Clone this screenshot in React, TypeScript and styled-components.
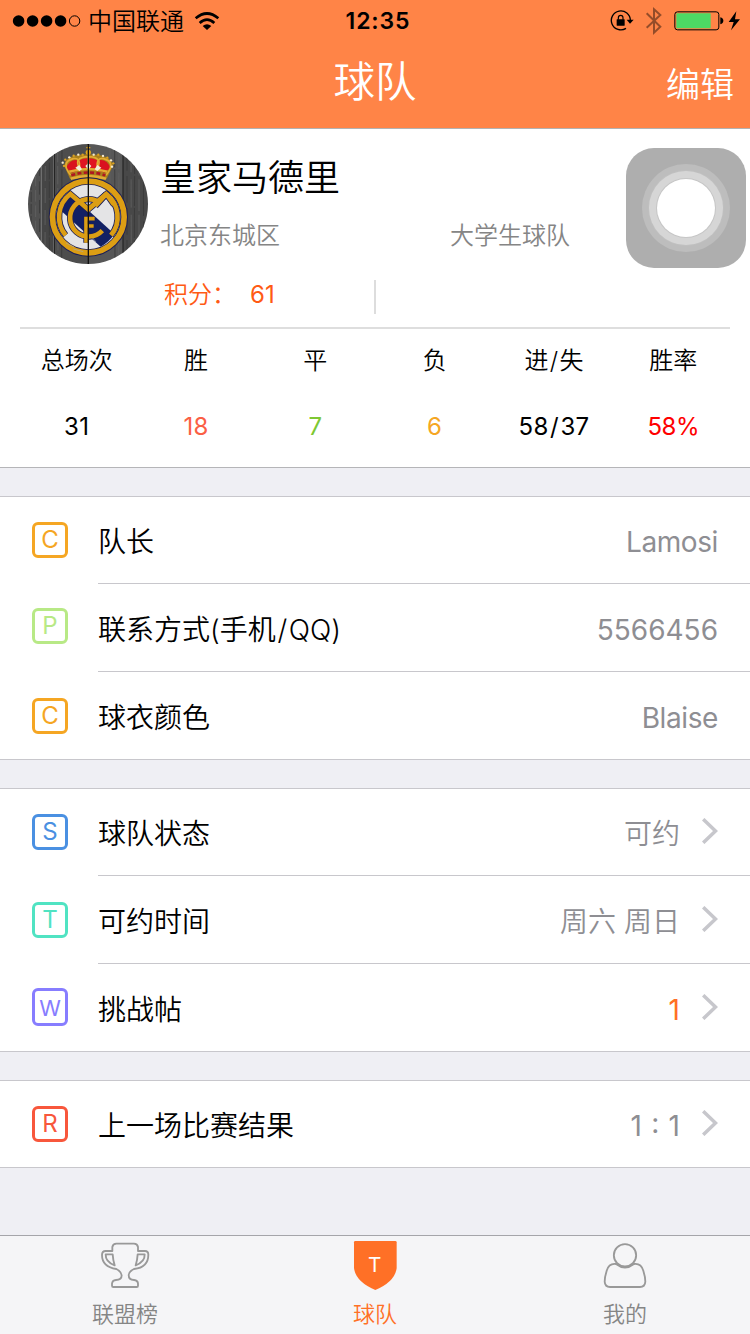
import React from "react";
import styled, { createGlobalStyle } from "styled-components";

const GlobalStyle = createGlobalStyle`
  * { box-sizing: border-box; }
  body {
    margin: 0;
    background: #efeff4;
    font-family: Inter, "Noto Sans CJK SC", sans-serif;
    font-weight: 350;
    color: #000;
  }
`;

const Screen = styled.div`
  width: 750px;
  height: 1334px;
  position: relative;
  display: flex;
  flex-direction: column;
  overflow: hidden;
  background: #efeff4;
`;

const Header = styled.header`
  height: 129px;
  flex: none;
  background: #ff8447;
  border-bottom: 1px solid #b2b2b2;
`;

const StatusBar = styled.div`
  height: 40px;
  display: grid;
  grid-template-columns: 1fr auto 1fr;
  align-items: center;
  padding: 1px 9px 0 12px;
`;

const StatusLeft = styled.div`
  display: flex;
  align-items: center;
`;

const Carrier = styled.span`
  margin: 0 10px 0 7px;
  padding-top: 2px;
  font-size: 24px;
  line-height: 38px;
`;

const Clock = styled.span`
  font-size: 23px;
  line-height: 38px;
  font-weight: 600;
  letter-spacing: 0.9px;
  padding-left: 3px;
`;

const NavBar = styled.div`
  height: 88px;
  display: grid;
  grid-template-columns: 1fr auto 1fr;
  color: #fff;
`;

const Title = styled.h1`
  grid-column: 2;
  margin: 0;
  font-size: 41.5px;
  line-height: 84px;
  font-weight: 350;
`;

const EditButton = styled.button`
  justify-self: end;
  border: 0;
  padding: 1px 16px 0 0;
  background: none;
  color: inherit;
  font: inherit;
  font-size: 34px;
  line-height: 88px;
`;

const Profile = styled.section`
  height: 339px;
  flex: none;
  background: #fff;
  border-bottom: 1px solid #b5b5b8;
`;

const Summary = styled.div`
  height: 200px;
  margin: 0 20px;
  padding: 15px 0 0 8px;
  display: flex;
  border-bottom: 2px solid #dedede;
`;

const Crest = styled.svg`
  width: 120px;
  height: 120px;
  flex: none;
  border-radius: 50%;
`;

const Facts = styled.div`
  margin-left: 12px;
  display: grid;
  grid-template-columns: 215px 75px auto;
  grid-template-rows: 68px 48px 50px;
  align-content: start;
`;

const TeamName = styled.h2`
  grid-column: 1 / -1;
  margin: 0;
  font-size: 36px;
  line-height: 69px;
  font-weight: 350;
`;

const Fact = styled.span`
  font-size: 24px;
  line-height: 48px;
  color: #858585;
  &:nth-child(3) { grid-column: 3; }
`;

const Points = styled.div`
  margin: 20px 0 0 4px;
  height: 34px;
  width: 212px;
  border-right: 2px solid #ddd;
  display: flex;
  gap: 14px;
  font-size: 24px;
  line-height: 29px;
  color: #ff5a14;
`;

const PointsValue = styled.span`
  font-weight: 400;
`;

const Stats = styled.div`
  padding: 0 17px;
  display: grid;
  grid-template-columns: repeat(6, 1fr);
`;

const Stat = styled.div`
  display: flex;
  flex-direction: column;
  align-items: center;
  padding-top: 2px;
  font-size: 24px;
`;

const StatName = styled.span`
  line-height: 60px;
`;

const StatValue = styled.span<{ $color: string; $tight: boolean }>`
  line-height: 72px;
  font-weight: 400;
  letter-spacing: ${(p) => (p.$tight ? -0.4 : 0.3)}px;
  color: ${(p) => p.$color};
`;

const Slash = styled.span`
  margin: 0 0.06em;
`;

const Group = styled.section`
  margin-top: 28px;
  flex: none;
  background: #fff;
  border: solid #c8c7cc;
  border-width: 1px 0;
`;

const RowBox = styled.div`
  height: 88px;
  padding-left: 32px;
  display: flex;
  &:first-child, &:last-child { height: 87px; }
  &:only-child { height: 86px; }
`;

const Badge = styled.div<{ $color: string; $top: number; $tall?: boolean }>`
  width: 36px;
  height: ${(p) => (p.$tall ? 38 : 36)}px;
  margin: ${(p) => p.$top}px 30px 0 0;
  flex: none;
  display: flex;
  justify-content: center;
  border: 3px solid ${(p) => p.$color};
  border-radius: 6px;
  color: ${(p) => p.$color};
  font-size: ${(p) => (p.$tall ? 22 : 24)}px;
  line-height: ${(p) => (p.$tall ? 35 : 30)}px;
  font-weight: 400;
`;

const RowBody = styled.div`
  flex: 1;
  display: flex;
  align-items: center;
  padding: 2px 32px 0 0;
  font-size: 28px;
  ${RowBox}:not(:last-child) > & { border-bottom: 1px solid #c8c7cc; }
`;

const Label = styled.span`
  flex: 1;
  margin-top: -2px;
`;

const Value = styled.span<{ $color?: string; $kind: "cjk" | "word" | "number" }>`
  margin-top: ${(p) => (p.$kind === "cjk" ? -2 : 2)}px;
  font-weight: ${(p) => (p.$kind === "cjk" ? 350 : 400)};
  letter-spacing: ${(p) => (p.$kind === "word" ? -0.4 : 0)}px;
  word-spacing: ${(p) => (p.$kind === "number" ? 1.5 : 0)}px;
  color: ${(p) => p.$color ?? "#8e8e93"};
`;

const Chevron = styled.svg`
  width: 16px;
  height: 26px;
  margin: -4px 0 0 22px;
`;

const TabBar = styled.nav`
  margin-top: auto;
  height: 99px;
  flex: none;
  display: grid;
  grid-template-columns: repeat(3, 1fr);
  background: #f5f5f7;
  border-top: 1px solid #a5a5aa;
`;

const Tab = styled.a<{ $active?: boolean }>`
  display: flex;
  flex-direction: column;
  align-items: center;
  padding-top: 5px;
  font-size: 22px;
  line-height: 46px;
  color: ${(p) => (p.$active ? "#ff7026" : "#858585")};
  svg { width: 50px; height: 50px; }
`;

const TouchButton = styled.div`
  position: absolute;
  top: 148px;
  left: 626px;
  width: 120px;
  height: 120px;
  border-radius: 28px;
  background: #aeaeae;
  display: grid;
  place-items: center;
`;

const TouchRing = styled.div`
  width: 58px;
  height: 58px;
  border-radius: 50%;
  background: #fff;
  box-shadow: 0 0 0 1px #c6c6c6, 0 0 0 8px #d6d6d6, 0 0 0 9px #c0c0c0, 0 0 0 15px #bdbdbd;
`;

const Signal = () => (
  <svg width="69" height="12" viewBox="0 0 69 12">
    {[0, 1, 2, 3].map((i) => (
      <circle key={i} cx={6.6 + i * 14} cy="6" r="5.8" />
    ))}
    <circle cx="62.6" cy="6" r="5.2" fill="none" stroke="#000" strokeWidth="1" />
  </svg>
);

const Wifi = () => (
  <svg width="26" height="20" viewBox="581 30 78 60" fill="none" stroke="#000" strokeWidth="8">
    <path d="M586 52Q620 23 654 52" />
    <path d="M598 66Q620 46 642 66" />
    <path d="M620 87L607 75Q620 64 633 75Z" fill="#000" stroke="none" />
  </svg>
);

const RotationLock = () => (
  <svg width="24" height="22" viewBox="706 28 72 66">
    <path d="M754 83A28.5 28.5 0 1 1 767 59" fill="none" stroke="#000" strokeWidth="4" />
    <path d="M756 57H777L766 69Z" />
    <rect x="726" y="56" width="24" height="19" rx="1" />
    <path d="M731 57V51A7 7 0 0 1 745 51V57" fill="none" stroke="#000" strokeWidth="3.5" />
  </svg>
);

const Bluetooth = () => (
  <svg width="18" height="28" viewBox="810 20 54 84">
    <path
      d="M815 39L856 79L837 97V27L856 44L815 82"
      fill="none"
      stroke="#000"
      strokeOpacity=".42"
      strokeWidth="6"
    />
  </svg>
);

const Battery = () => (
  <svg width="50" height="20" viewBox="896 32 150 60">
    <rect x="898.5" y="34.5" width="132" height="54" rx="8" fill="none" stroke="#000" strokeWidth="3" />
    <rect x="903" y="39" width="103" height="45" rx="2" fill="#4cd964" />
    <path d="M1035 51Q1044 53 1044 61.500Q1044 70 1035 72Z" />
  </svg>
);

const Bolt = () => (
  <svg width="13" height="20" viewBox="1059 30 39 60">
    <path d="M1084 31L1061 63H1076L1068 88L1095 55H1080Z" />
  </svg>
);

const StatusIcons = styled.div`
  display: flex;
  align-items: center;
  justify-content: flex-end;
  svg:nth-child(1) { margin-right: 11px; }
  svg:nth-child(2) { margin-right: 11px; }
  svg:nth-child(3) { margin-right: 4px; }
`;

const planks = [
  [24, 40, "#505050"],
  [64, 36, "#454545"],
  [100, 105, "#4d4d4d"],
  [205, 104, "#575757"],
  [309, 75, "#484848"],
] as const;

const grain = [34, 47, 58, 76, 88, 113, 126, 270, 284, 297, 321, 333, 344, 357, 370];
const pearls = [
  [132, 84], [128, 74], [136, 65], [148, 58], [161, 53], [175, 50], [188, 50],
  [221, 50], [235, 50], [249, 54], [262, 59], [273, 67], [280, 76], [276, 86],
];

const TeamCrest = () => (
  <Crest viewBox="24 18 360 360">
    {planks.map(([x, w, c]) => (
      <rect key={x} x={x} y="18" width={w} height="360" fill={c} />
    ))}
    {grain.map((x, i) => (
      <path
        key={x}
        d={`M${x} 18L${x + (i % 3) - 1} 378`}
        stroke={i % 2 ? "#626262" : "#383838"}
        strokeWidth="2.5"
        strokeDasharray={`${30 + i * 5} ${6 + (i % 4) * 5}`}
      />
    ))}
    <path d="M103 18V378M309 18V378" stroke="#1c1c1c" strokeWidth="3" />

    <path d="M150 122L133 84Q132 50 205 49Q277 50 279 84L260 122Z" fill="#a87f1c" />
    <path d="M139 90Q148 64 170 66L178 96L156 104Z" fill="#d9121f" />
    <path d="M171 80Q176 60 205 61Q234 60 239 80L232 92H178Z" fill="#e01522" />
    <path d="M271 90Q262 64 240 66L232 96L254 104Z" fill="#d9121f" />
    <g fill="none" stroke="#e3ac34" strokeWidth="5">
      <path d="M152 112Q120 72 160 62Q182 58 178 90" />
      <path d="M258 112Q290 72 250 62Q228 58 232 90" />
      <path d="M178 90Q160 58 205 56Q250 58 232 90" />
      <path d="M205 56V100" />
      <path d="M148 101Q205 84 262 101" strokeWidth="7" />
      <path d="M152 122Q205 106 258 122" strokeWidth="8" />
    </g>
    <path d="M154 112Q205 95 256 112" fill="none" stroke="#b01622" strokeWidth="8" strokeDasharray="12 7" />
    <path d="M166 89L178 81L186 94L178 99ZM244 89L232 81L224 94L232 99ZM196 84L205 75L214 84L205 95Z" fill="#f3eedb" />
    <circle cx="205" cy="43" r="8" fill="#e0a51c" />
    <path d="M205 22V38M199 29H211" stroke="#e0a51c" strokeWidth="4" />
    {pearls.map(([x, y], i) => (
      <circle key={i} cx={x} cy={y} r="3.500" fill={i % 2 ? "#f4ead2" : "#dca31f"} />
    ))}

    <circle cx="205" cy="237" r="119" fill="#1c1f58" />
    <circle cx="205" cy="237" r="107.500" fill="none" stroke="#dc9e14" strokeWidth="17" />
    <circle cx="205" cy="237" r="97" fill="#e4e4e6" />
    <path d="M151 168L283 288Q268 312 242 326L125 220Q128 187 151 168Z" fill="#122064" />
    <g fill="none" strokeLinejoin="miter">
      {(
        [
          ["#1c1f58", 19],
          ["#dc9e14", 14],
        ] as const
      ).map(([c, w]) => (
        <g key={c} stroke={c} strokeWidth={w}>
          <path d="M137 292A87 87 0 0 1 151 168L205 214L259 168A87 87 0 0 1 273 292" />
          <path d="M240 195A56 56 0 1 0 247 278" />
          <path d="M259 168L226 204M259 168L282 200" />
          <path d="M198 314V242H224M198 264H221" strokeWidth={w - 3} />
        </g>
      ))}
    </g>
    <path d="M138 315L162 327M160 333L190 341M218 300L228 312" stroke="#aaa" strokeWidth="2" />
    <path d="M205 18V378" stroke="#111" strokeWidth="4" />
  </Crest>
);

const TrophyIcon = () => (
  <svg viewBox="120 48 150 150" fill="none" stroke="#999" strokeWidth="5.500" strokeLinejoin="round">
    <path d="M157 78V66Q159 56 169 56H222Q232 56 234 66V78H255Q265 78 265 89Q265 127 222 132Q206 140 206 150Q206 165 222 165Q234 167 234 176V182Q234 186 230 186H160Q156 186 156 182V176Q157 166 168 165Q185 165 185 151Q184 140 169 132Q126 125 126 90Q126 78 137 78Z" />
    <path d="M158 88H137Q136 111 164 121Q159 105 158 88ZM233 88H254Q255 111 227 121Q232 105 233 88Z" />
  </svg>
);

const ShieldIcon = () => (
  <svg viewBox="870 48 150 150">
    <path d="M886 48H1006Q1010 48 1010 52V129Q1005 170 946 195Q887 170 882 129V52Q882 48 886 48Z" fill="#ff7026" />
    <text x="944" y="142" textAnchor="middle" fontFamily="Inter" fontSize="62" fontWeight="400" fill="#fff">
      T
    </text>
  </svg>
);

const PersonIcon = () => (
  <svg viewBox="120 48 150 150" fill="none" stroke="#999" strokeWidth="5.500">
    <circle cx="195" cy="91" r="33.500" />
    <path d="M168 117Q147 114 140 137Q134 156 134 170Q135 186 150 186H240Q255 186 256 170Q256 156 250 137Q243 114 222 117Q195 138 168 117Z" />
  </svg>
);

type RowData = {
  letter: string;
  color: string;
  label: string;
  value: string;
  valueColor?: string;
  link?: boolean;
  top: number;
  tall?: boolean;
};

const groups: RowData[][] = [
  [
    { letter: "C", color: "#f5a623", label: "队长", value: "Lamosi", top: 25 },
    { letter: "P", color: "#b8e986", label: "联系方式(手机/QQ)", value: "5566456", top: 24 },
    { letter: "C", color: "#f5a623", label: "球衣颜色", value: "Blaise", top: 26 },
  ],
  [
    { letter: "S", color: "#4a90e2", label: "球队状态", value: "可约", link: true, top: 25 },
    { letter: "T", color: "#50e3c2", label: "可约时间", value: "周六 周日", link: true, top: 26 },
    { letter: "W", color: "#877dff", label: "挑战帖", value: "1", valueColor: "#ff7026", link: true, top: 24, tall: true },
  ],
  [{ letter: "R", color: "#f8573c", label: "上一场比赛结果", value: "1 : 1", link: true, top: 25 }],
];

const stats = [
  ["总场次", "31", "#000"],
  ["胜", "18", "#fb5f45"],
  ["平", "7", "#7ec832"],
  ["负", "6", "#f5a623"],
  ["进/失", "58/37", "#000"],
  ["胜率", "58%", "#ff0000"],
];

const valueKind = (text: string) =>
  /^[a-z]+$/i.test(text) ? "word" : /^[\d :]+$/.test(text) ? "number" : "cjk";

// Gives the slash between two terms a little room on both sides.
const Spaced = ({ text }: { text: string }) => {
  const [before, after] = text.split("/");
  return after === undefined ? (
    <>{text}</>
  ) : (
    <>
      {before}
      <Slash>/</Slash>
      {after}
    </>
  );
};

const Row = ({ letter, color, label, value, valueColor, link, top, tall }: RowData) => (
  <RowBox>
    <Badge $color={color} $top={top} $tall={tall}>{letter}</Badge>
    <RowBody>
      <Label><Spaced text={label} /></Label>
      <Value $color={valueColor} $kind={valueKind(value)}>{value}</Value>
      {link && (
        <Chevron viewBox="0 0 16 26">
          <path d="M1.200 1.200L13.500 13L1.200 24.800" fill="none" stroke="#c7c7cc" strokeWidth="3.500" />
        </Chevron>
      )}
    </RowBody>
  </RowBox>
);

export default function App() {
  return (
    <Screen>
      <GlobalStyle />
      <Header>
        <StatusBar>
          <StatusLeft>
            <Signal />
            <Carrier>中国联通</Carrier>
            <Wifi />
          </StatusLeft>
          <Clock>12:35</Clock>
          <StatusIcons>
            <RotationLock />
            <Bluetooth />
            <Battery />
            <Bolt />
          </StatusIcons>
        </StatusBar>
        <NavBar>
          <Title>球队</Title>
          <EditButton>编辑</EditButton>
        </NavBar>
      </Header>

      <Profile>
        <Summary>
          <TeamCrest />
          <Facts>
            <TeamName>皇家马德里</TeamName>
            <Fact>北京东城区</Fact>
            <Fact>大学生球队</Fact>
            <Points>
              <span>积分：</span>
              <PointsValue>61</PointsValue>
            </Points>
          </Facts>
        </Summary>
        <Stats>
          {stats.map(([name, value, color]) => (
            <Stat key={name}>
              <StatName><Spaced text={name} /></StatName>
              <StatValue $color={color} $tight={value.endsWith("%")}>
                <Spaced text={value} />
              </StatValue>
            </Stat>
          ))}
        </Stats>
      </Profile>

      {groups.map((rows, i) => (
        <Group key={i}>
          {rows.map((row) => (
            <Row key={row.label} {...row} />
          ))}
        </Group>
      ))}

      <TabBar>
        <Tab>
          <TrophyIcon />
          联盟榜
        </Tab>
        <Tab $active>
          <ShieldIcon />
          球队
        </Tab>
        <Tab>
          <PersonIcon />
          我的
        </Tab>
      </TabBar>

      <TouchButton>
        <TouchRing />
      </TouchButton>
    </Screen>
  );
}
